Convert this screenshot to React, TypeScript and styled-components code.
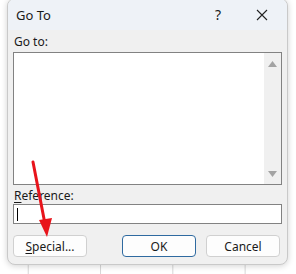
import styled, { createGlobalStyle } from "styled-components";

const GlobalStyle = createGlobalStyle`
  html, body {
    margin: 0;
    padding: 0;
  }
  body {
    font-family: "Segoe UI", "Noto Sans", "Open Sans", sans-serif;
    font-size: 12px;
    color: #1a1a1a;
  }
`;

function ScrollArrow({ down }: { down?: boolean }) {
  return (
    <svg width="9" height="6" viewBox="0 0 9 6">
      <polygon points={down ? "0,0 9,0 4.5,6" : "0,6 9,6 4.5,0"} fill="#a3a3a3" />
    </svg>
  );
}

function RedArrow() {
  return (
    <ArrowLayer width="296" height="274" viewBox="0 0 296 274">
      <line x1="33" y1="162" x2="45" y2="224" stroke="#e8141b" strokeWidth="3" strokeLinecap="round" />
      <polygon points="39,220 52,218 47,237" fill="#e8141b" />
    </ArrowLayer>
  );
}

function App() {
  return (
    <>
      <GlobalStyle />
      <Sheet>
        <Dialog>
          <TitleBar>
            <Title>Go To</Title>
            <TitleButtons>
              <TitleGlyph>?</TitleGlyph>
              <svg width="12" height="12" viewBox="0 0 12 12">
                <path d="M1 1 L11 11 M11 1 L1 11" stroke="#222" strokeWidth="1.1" />
              </svg>
            </TitleButtons>
          </TitleBar>
          <Body>
            <Label>Go to:</Label>
            <ListBox>
              <ListArea />
              <ScrollBar>
                <ScrollArrow />
                <ScrollArrow down />
              </ScrollBar>
            </ListBox>
            <Label $gap={3}>
              <u>R</u>eference:
            </Label>
            <TextInput>
              <Caret />
            </TextInput>
            <ButtonRow>
              <Button>
                <u>S</u>pecial...
              </Button>
              <Spacer />
              <Button $primary>OK</Button>
              <Button>Cancel</Button>
            </ButtonRow>
          </Body>
        </Dialog>
        <RedArrow />
      </Sheet>
    </>
  );
}

export default App;

const Sheet = styled.div`
  position: relative;
  width: 296px;
  height: 274px;
  overflow: hidden;
  background-color: #ffffff;
  background-image:
    repeating-linear-gradient(
      to bottom,
      transparent 0,
      transparent 28.5px,
      #d6d6d6 28.5px,
      #d6d6d6 29.5px,
      transparent 29.5px,
      transparent 50px
    ),
    repeating-linear-gradient(
      to right,
      transparent 0,
      transparent 27.5px,
      #d6d6d6 27.5px,
      #d6d6d6 28.5px,
      transparent 28.5px,
      transparent 72.3px
    );
  background-size: 100% 21.45px, 72.3px 100%;
  background-position: 0 7.6px, 0 0;
`;

const Dialog = styled.div`
  margin-left: 7px;
  margin-top: -2px;
  width: 281px;
  height: 267px;
  background: #f0f0f0;
  border-radius: 8px;
  border: 1px solid #c9c9c9;
  box-sizing: border-box;
  box-shadow: 0 1px 6px rgba(0, 0, 0, 0.18);
  overflow: hidden;
  display: flex;
  flex-direction: column;
`;

const TitleBar = styled.div`
  height: 31px;
  flex: none;
  background: #eef2f7;
  display: flex;
  align-items: center;
  padding: 0 0 0 8px;
  box-sizing: border-box;
`;

const Title = styled.div`
  font-size: 13px;
  flex: 1;
  padding-top: 1px;
`;

const TitleButtons = styled.div`
  display: flex;
  align-items: center;
  gap: 35px;
  margin-right: 19px;
  padding-top: 1px;
`;

const TitleGlyph = styled.span`
  font-size: 14px;
  line-height: 1;
`;

const Body = styled.div`
  flex: 1;
  display: flex;
  flex-direction: column;
  padding: 4px 5px 0 5px;
`;

const Label = styled.div<{ $gap?: number }>`
  line-height: 16px;
  height: 16px;
  padding-left: 1px;
  margin-top: ${(p) => p.$gap ?? 0}px;
  u {
    text-decoration-thickness: 1px;
    text-underline-offset: 2px;
  }
`;

const ListBox = styled.div`
  margin-top: 2px;
  height: 133px;
  border: 1px solid #828282;
  box-sizing: border-box;
  display: flex;
  background: #ffffff;
`;

const ListArea = styled.div`
  flex: 1;
`;

const ScrollBar = styled.div`
  width: 17px;
  background: #f0f0f0;
  display: flex;
  flex-direction: column;
  justify-content: space-between;
  align-items: center;
  padding: 8px 0 7px;
`;

const TextInput = styled.div`
  height: 20px;
  border: 1px solid #828282;
  box-sizing: border-box;
  background: #ffffff;
  display: flex;
  align-items: center;
  padding-left: 3px;
`;

const Caret = styled.div`
  width: 1px;
  height: 13px;
  background: #000;
`;

const ButtonRow = styled.div`
  display: flex;
  gap: 10px;
  margin-top: 11px;
  padding-right: 2px;
`;

const Spacer = styled.div`
  flex: 1;
`;

const Button = styled.div<{ $primary?: boolean }>`
  width: 74px;
  height: 22px;
  box-sizing: border-box;
  background: #fdfdfd;
  border: 1px solid ${(p) => (p.$primary ? "#2f6aa0" : "#d0d0d0")};
  border-radius: 4px;
  display: flex;
  align-items: center;
  justify-content: center;
  font-size: 12px;
  u {
    text-decoration-thickness: 1px;
    text-underline-offset: 2px;
  }
`;

const ArrowLayer = styled.svg`
  position: absolute;
  left: 0;
  top: 0;
  pointer-events: none;
`;
